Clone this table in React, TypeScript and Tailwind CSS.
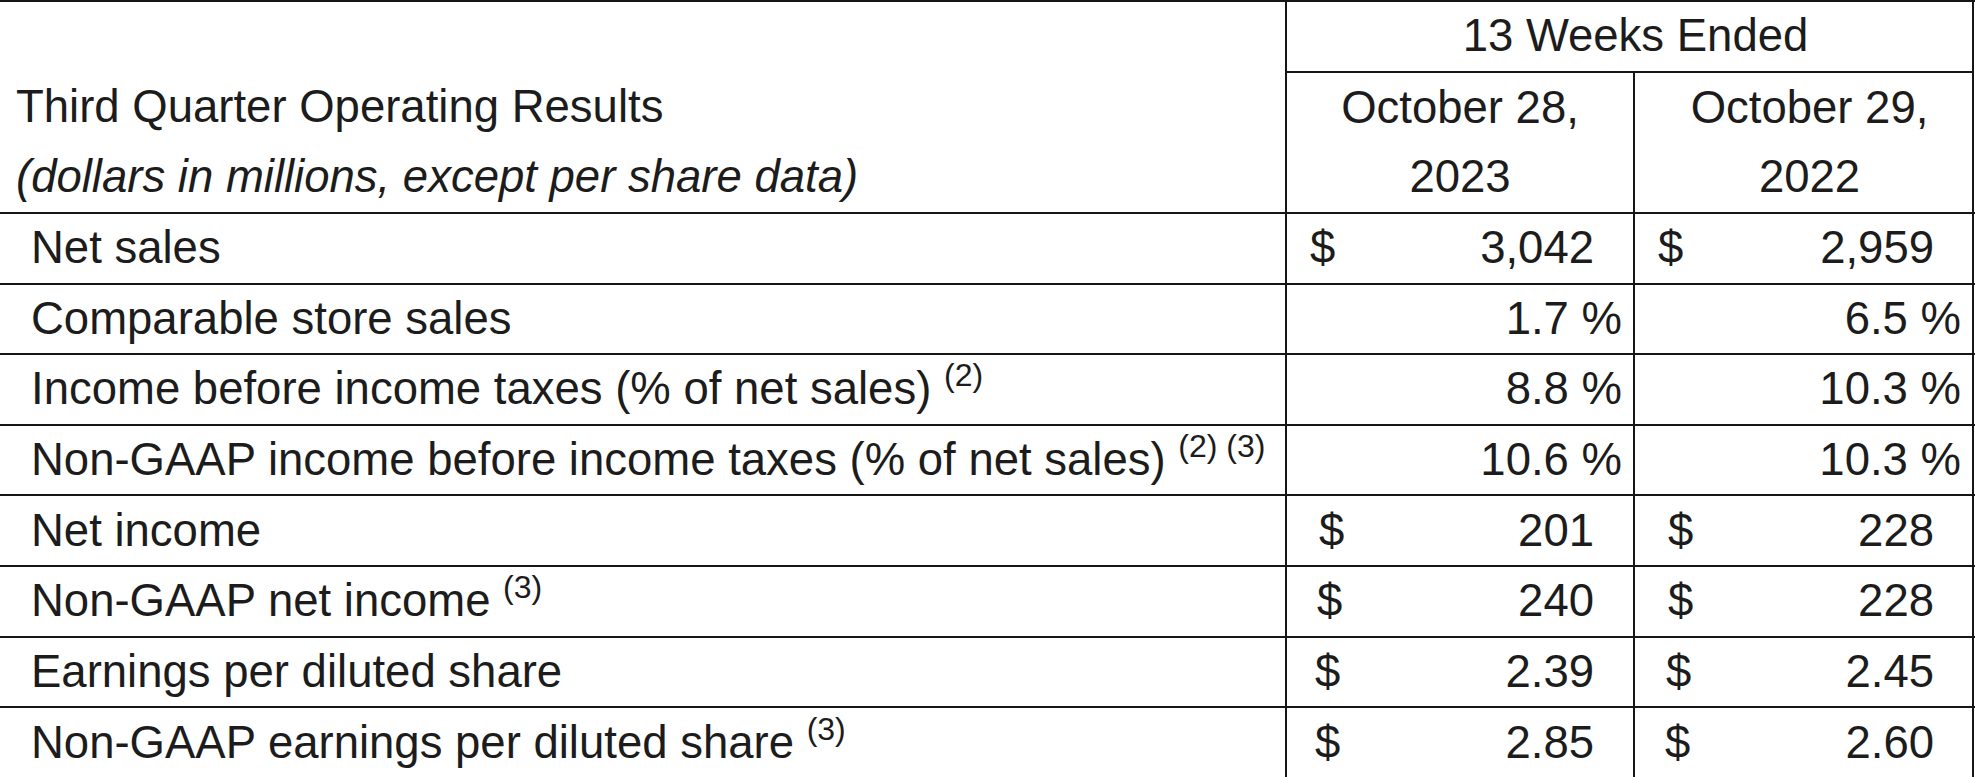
type Row = {
  label: string
  notes?: string
  kind: "usd" | "pct"
  a: string
  b: string
  padA?: string
  padB?: string
}

const rows: Row[] = [
  { label: "Net sales", kind: "usd", a: "3,042", b: "2,959", padA: "pl-[23px]", padB: "pl-[23px]" },
  { label: "Comparable store sales", kind: "pct", a: "1.7 %", b: "6.5 %" },
  { label: "Income before income taxes (% of net sales)", notes: "(2)", kind: "pct", a: "8.8 %", b: "10.3 %" },
  { label: "Non-GAAP income before income taxes (% of net sales)", notes: "(2) (3)", kind: "pct", a: "10.6 %", b: "10.3 %" },
  { label: "Net income", kind: "usd", a: "201", b: "228", padA: "pl-[32px]", padB: "pl-[33px]" },
  { label: "Non-GAAP net income", notes: "(3)", kind: "usd", a: "240", b: "228", padA: "pl-[30px]", padB: "pl-[33px]" },
  { label: "Earnings per diluted share", kind: "usd", a: "2.39", b: "2.45", padA: "pl-[28px]", padB: "pl-[31px]" },
  { label: "Non-GAAP earnings per diluted share", notes: "(3)", kind: "usd", a: "2.85", b: "2.60", padA: "pl-[28px]", padB: "pl-[30px]" },
]

function ValueCell({ kind, value, pad, right }: { kind: Row["kind"]; value: string; pad?: string; right: string }) {
  if (kind === "pct") {
    return (
      <div className="h-full flex items-center justify-end pr-[11px] border-r-2 border-[#161616]">
        <span>{value}</span>
      </div>
    )
  }
  return (
    <div className={`h-full flex items-center justify-between ${pad} ${right} border-r-2 border-[#161616]`}>
      <span>$</span>
      <span>{value}</span>
    </div>
  )
}

export default function App() {
  return (
    <div className="w-[1975px] h-[777px] overflow-hidden bg-white text-[#1c1c1c] text-[45.5px] font-['Liberation_Sans',Arial,sans-serif] leading-normal">
      <div className="border-t-2 border-[#161616]">
        {/* header */}
        <div className="grid grid-cols-[1287px_687px] border-b-2 border-[#161616]">
          <div className="flex flex-col border-r-2 border-[#161616] pl-[16px]">
            <div className="h-[70px]" />
            <div className="h-[70px] flex items-center">Third Quarter Operating Results</div>
            <div className="h-[70px] flex items-center italic">(dollars in millions, except per share data)</div>
          </div>
          <div className="flex flex-col border-r-2 border-[#161616]">
            <div className="h-[71px] flex items-center justify-center border-b-2 border-[#161616] pl-[12px]">13 Weeks Ended</div>
            <div className="grid grid-cols-[348px_337px] h-[139px]">
              <div className="flex flex-col items-center justify-center border-r-2 border-[#161616]">
                <div className="h-[69.5px] flex items-center">October 28,</div>
                <div className="h-[69.5px] flex items-center">2023</div>
              </div>
              <div className="flex flex-col items-center justify-center pl-[12px]">
                <div className="h-[69.5px] flex items-center">October 29,</div>
                <div className="h-[69.5px] flex items-center">2022</div>
              </div>
            </div>
          </div>
        </div>

        {/* body */}
        {rows.map((r, i) => {
          const last = i === rows.length - 1
          return (
            <div
              key={r.label}
              className={`grid grid-cols-[1287px_348px_339px] h-[70.6px] ${last ? "" : "border-b-2 border-[#161616]"}`}
            >
              <div className="h-full flex items-center pl-[31px] border-r-2 border-[#161616] whitespace-nowrap">
                <span>
                  {r.label}
                  {r.notes && (
                    <>
                      {" "}
                      <span className="text-[32px] leading-none align-[18px]">{r.notes}</span>
                    </>
                  )}
                </span>
              </div>
              <ValueCell kind={r.kind} value={r.a} pad={r.padA} right="pr-[39px]" />
              <ValueCell kind={r.kind} value={r.b} pad={r.padB} right="pr-[38px]" />
            </div>
          )
        })}
      </div>
    </div>
  )
}
